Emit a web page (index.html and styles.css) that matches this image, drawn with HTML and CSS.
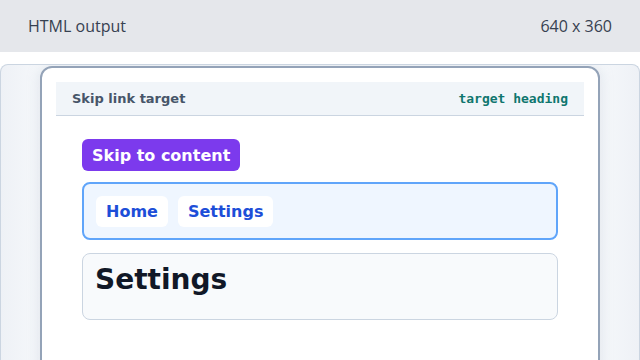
FILE: index.html
```html
<!DOCTYPE html>
<html lang="en">
<head>
  <meta charset="UTF-8" />
  <meta name="viewport" content="width=device-width, initial-scale=1.0" />
  <title>Skip link target</title>
  <link rel="stylesheet" href="styles.css">
</head>
<body>
  <div class="topbar">
    <span>HTML output</span>
    <span>640 x 360</span>
  </div>
  <div class="stage">
    <div class="frame">
      <div class="frame-head">
        <span class="title">Skip link target</span>
        <code class="tag">target heading</code>
      </div>
      <div class="content">
        <a class="skip" href="#main">Skip to content</a>
        <nav class="nav">
          <a href="#">Home</a>
          <a href="#">Settings</a>
        </nav>
        <main id="main" class="panel">
          <h1>Settings</h1>
        </main>
      </div>
    </div>
  </div>
</body>
</html>
```

FILE: styles.css
```css
* {
  box-sizing: border-box;
}
html, body {
  margin: 0;
  padding: 0;
  height: 100%;
  overflow: hidden;
}
body {
  background: #fff;
  font-family: "DejaVu Sans", sans-serif;
}
.topbar {
  height: 52px;
  background: #e5e7eb;
  color: #374151;
  display: flex;
  align-items: center;
  justify-content: space-between;
  padding: 0 28px;
  font-family: "Open Sans", "Noto Sans", sans-serif;
  font-size: 16px;
}
.stage {
  margin-top: 12px;
  height: 296px;
  overflow: hidden;
  border: 1px solid #cbd5e1;
  border-bottom: 0;
  border-radius: 8px 8px 0 0;
  background: linear-gradient(90deg, #eef1f6, #f8fafc 8%, #f8fafc 92%, #eef1f6);
  padding: 1px 39px 0;
}
.frame {
  height: 320px;
  background: #fff;
  border: 2px solid #94a3b8;
  border-radius: 12px;
  padding: 14px;
  box-shadow: 0 0 14px rgba(148, 163, 184, 0.25);
}
.frame-head {
  height: 34px;
  background: #f1f5f9;
  border-bottom: 1px solid #cbd5e1;
  display: flex;
  align-items: center;
  justify-content: space-between;
  padding: 0 16px;
  font-size: 13px;
}
.frame-head .title {
  font-weight: bold;
  color: #475569;
}
.frame-head .tag {
  font-family: "DejaVu Sans Mono", monospace;
  font-weight: bold;
  color: #0f766e;
}
.content {
  padding: 23px 26px 0;
  display: flex;
  flex-direction: column;
  align-items: flex-start;
}
.skip {
  display: inline-flex;
  align-items: center;
  height: 32px;
  padding: 0 10px;
  background: #7c3aed;
  color: #fff;
  font-weight: bold;
  font-size: 16px;
  border-radius: 6px;
  text-decoration: none;
}
.nav {
  align-self: stretch;
  margin-top: 11px;
  height: 58px;
  background: #eff6ff;
  border: 2px solid #60a5fa;
  border-radius: 8px;
  padding: 12px;
  display: flex;
  gap: 10px;
}
.nav a {
  height: 31px;
  display: flex;
  align-items: center;
  padding: 0 10px;
  background: #fff;
  border-radius: 6px;
  color: #1d4ed8;
  font-weight: bold;
  font-size: 16px;
  text-decoration: none;
}
.panel {
  align-self: stretch;
  margin-top: 13px;
  height: 67px;
  background: #f8fafc;
  border: 1px solid #cbd5e1;
  border-radius: 8px;
  padding: 9px 12px;
}
.panel h1 {
  margin: 0;
  font-size: 28px;
  color: #111827;
}
```
